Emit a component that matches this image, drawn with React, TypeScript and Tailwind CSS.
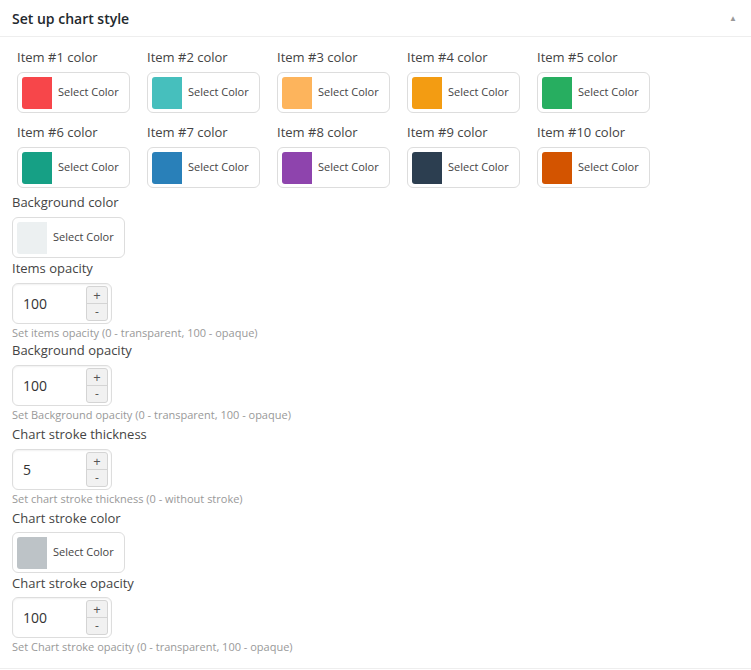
const items = [
  '#f7464a',
  '#46bfbd',
  '#fdb45c',
  '#f39c12',
  '#27ae60',
  '#16a085',
  '#2980b9',
  '#8e44ad',
  '#2c3e50',
  '#d35400',
];

function ColorPicker({ color }: { color: string }) {
  return (
    <div className="flex h-[41px] w-[113px] items-center rounded-[6px] border border-[#dddddd] bg-white pl-[4px]">
      <div className="h-[32px] w-[30px] rounded-l-[3px]" style={{ backgroundColor: color }} />
      <span className="ml-[6px] text-[11px] text-[#444]">Select Color</span>
    </div>
  );
}

function NumberBox({ value }: { value: string }) {
  return (
    <div className="flex h-[41px] w-[100px] items-center rounded-[6px] border border-[#dddddd] bg-white shadow-[inset_0_1px_2px_rgba(0,0,0,0.06)]">
      <span className="ml-[10px] flex-1 text-[14px] text-[#333]">{value}</span>
      <div className="mr-[3px] flex h-[35px] w-[22px] flex-col rounded-[3px] border border-[#d4d4d4] bg-[#f1f1f1] text-[#555]">
        <div className="flex flex-1 items-center justify-center border-b border-[#d4d4d4] text-[13px] leading-none">+</div>
        <div className="flex flex-1 items-center justify-center text-[12px] leading-none">-</div>
      </div>
    </div>
  );
}

function Label({ children }: { children: React.ReactNode }) {
  return <div className="h-[20px] text-[13px] leading-[20px] text-[#444]">{children}</div>;
}

function Help({ children }: { children: React.ReactNode }) {
  return <div className="mt-[2px] h-[14px] text-[11px] leading-[14px] text-[#999]">{children}</div>;
}

export default function App() {
  return (
    <div className="min-h-[670px] bg-white font-['Open_Sans',sans-serif]">
      <div className="flex h-[37px] items-center justify-between border-b border-[#eeeeee] pl-[12px] pr-[14px]">
        <h2 className="text-[14px] font-semibold text-[#23282d]">Set up chart style</h2>
        <span className="text-[8px] text-[#999]">▲</span>
      </div>

      <div className="border-b border-[#eeeeee] px-[12px] pb-[14px] pt-[10px]">
        {/* item colours */}
        <div className="grid w-[655px] grid-cols-5 gap-y-[9px] pl-[5px]">
          {items.map((c, i) => (
            <div key={c}>
              <Label>Item #{i + 1} color</Label>
              <div className="mt-[5px]">
                <ColorPicker color={c} />
              </div>
            </div>
          ))}
        </div>

        <div className="mt-[4px]">
          <Label>Background color</Label>
          <div className="mt-[5px]">
            <ColorPicker color="#ecf0f1" />
          </div>
        </div>

        <Label>Items opacity</Label>
        <div className="mt-[5px]">
          <NumberBox value="100" />
        </div>
        <Help>Set items opacity (0 - transparent, 100 - opaque)</Help>

        <Label>Background opacity</Label>
        <div className="mt-[5px]">
          <NumberBox value="100" />
        </div>
        <Help>Set Background opacity (0 - transparent, 100 - opaque)</Help>

        <div className="mt-[2px]">
          <Label>Chart stroke thickness</Label>
        </div>
        <div className="mt-[5px]">
          <NumberBox value="5" />
        </div>
        <Help>Set chart stroke thickness (0 - without stroke)</Help>

        <div className="mt-[2px]">
          <Label>Chart stroke color</Label>
        </div>
        <div className="mt-[4px]">
          <ColorPicker color="#bdc3c7" />
        </div>

        <Label>Chart stroke opacity</Label>
        <div className="mt-[4px]">
          <NumberBox value="100" />
        </div>
        <Help>Set Chart stroke opacity (0 - transparent, 100 - opaque)</Help>
      </div>
    </div>
  );
}
